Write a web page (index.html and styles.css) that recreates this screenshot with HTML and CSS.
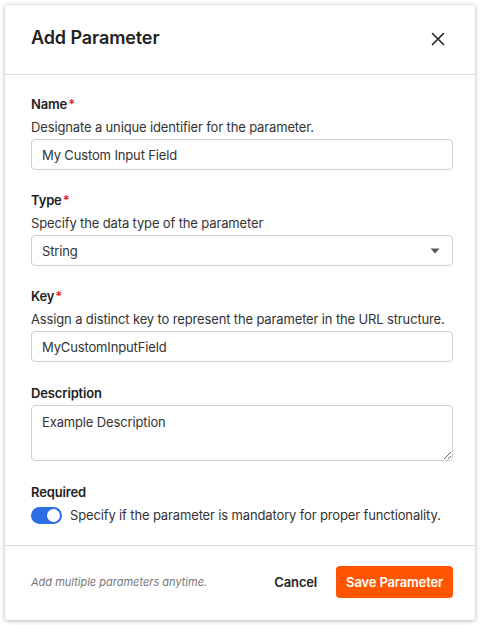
FILE: index.html
```html
<!DOCTYPE html>
<html>
<head>
<meta charset="utf-8">
<link rel="stylesheet" href="styles.css">
</head>
<body>
<div class="modal">
  <div class="modal-header">
    <h2 class="title">Add Parameter</h2>
    <button class="close" aria-label="Close">
      <svg width="14" height="14" viewBox="0 0 14 14"><path d="M1.5 1.5 L12.5 12.5 M12.5 1.5 L1.5 12.5" stroke="#222" stroke-width="1.6" fill="none" stroke-linecap="round"/></svg>
    </button>
  </div>
  <div class="modal-body">
    <div class="field">
      <div class="label">Name<span class="req">*</span></div>
      <div class="desc">Designate a unique identifier for the parameter.</div>
      <input class="input" type="text" value="My Custom Input Field">
    </div>
    <div class="field">
      <div class="label">Type<span class="req">*</span></div>
      <div class="desc">Specify the data type of the parameter</div>
      <div class="select">
        <span>String</span>
        <svg width="10" height="6" viewBox="0 0 10 6"><path d="M0.5 0.5 L9.5 0.5 L5 5.5 Z" fill="#555"/></svg>
      </div>
    </div>
    <div class="field">
      <div class="label">Key<span class="req">*</span></div>
      <div class="desc">Assign a distinct key to represent the parameter in the URL structure.</div>
      <input class="input" type="text" value="MyCustomInputField">
    </div>
    <div class="field field-nudge">
      <div class="label">Description</div>
      <textarea class="textarea">Example Description</textarea>
    </div>
    <div class="field field-nudge">
      <div class="label">Required</div>
      <div class="toggle-row">
        <span class="toggle"><span class="knob"></span></span>
        <span class="toggle-text">Specify if the parameter is mandatory for proper functionality.</span>
      </div>
    </div>
  </div>
  <div class="modal-footer">
    <span class="hint">Add multiple parameters anytime.</span>
    <div class="actions">
      <button class="btn-cancel">Cancel</button>
      <button class="btn-save">Save Parameter</button>
    </div>
  </div>
</div>
</body>
</html>
```
FILE: styles.css
```css
* { box-sizing: border-box; }
html, body { margin: 0; padding: 0; background: #fff; }
body {
  padding: 5px;
  font-family: Inter, "Noto Sans", sans-serif;
  color: #222;
}
.modal {
  width: 470px;
  height: 615px;
  background: #fff;
  border-radius: 2px;
  box-shadow: 0 0 1px rgba(0,0,0,0.35), 0 1px 5px rgba(0,0,0,0.25);
  display: flex;
  flex-direction: column;
}
.modal-header {
  height: 70px;
  display: flex;
  align-items: center;
  justify-content: space-between;
  padding: 0 30px 0 26px;
  border-bottom: 1px solid #dedede;
}
.title {
  margin: 0;
  font-size: 18px;
  font-weight: 600;
  color: #222;
  letter-spacing: -0.1px;
  padding-bottom: 4px;
}
.close {
  border: 0;
  background: none;
  padding: 0;
  width: 14px;
  height: 14px;
  display: flex;
  cursor: pointer;
  margin-bottom: 2px;
}
.modal-body {
  padding: 19px 22px 20px 26px;
  display: flex;
  flex-direction: column;
  gap: 20px;
  border-bottom: 1px solid #dedede;
  letter-spacing: -0.14px;
}
.field { display: flex; flex-direction: column; }
.field-nudge { margin-top: 1px; }
.label {
  font-size: 13px;
  font-weight: 600;
  line-height: 20px;
  color: #222;
}
.req { color: #e02424; margin-left: 1px; }
.desc {
  font-size: 13px;
  line-height: 20px;
  margin-top: 3px;
  color: #333;
}
.input, .select, .textarea {
  margin-top: 2px;
  width: 100%;
  height: 31px;
  border: 1px solid #cfcfcf;
  border-radius: 4px;
  font-family: Inter, "Noto Sans", sans-serif;
  font-size: 13px;
  letter-spacing: -0.14px;
  color: #333;
  padding: 0 10px;
  background: #fff;
}
.select {
  display: flex;
  align-items: center;
  justify-content: space-between;
  padding-right: 12px;
}
.textarea {
  height: 56px;
  padding: 8px 10px;
  line-height: 16px;
  resize: vertical;
}
.toggle-row {
  margin-top: 3px;
  height: 20px;
  display: flex;
  align-items: center;
  gap: 8px;
}
.toggle {
  width: 31px;
  height: 17px;
  border-radius: 9px;
  background: #2b6de3;
  display: flex;
  align-items: center;
  justify-content: flex-end;
  padding: 0 2px;
}
.knob {
  width: 13px;
  height: 13px;
  border-radius: 50%;
  background: #fff;
}
.toggle-text { font-size: 13px; color: #333; }
.modal-footer {
  flex: 1;
  display: flex;
  align-items: center;
  justify-content: space-between;
  padding: 0 22px 2px 26px;
}
.hint {
  font-size: 11px;
  font-style: italic;
  color: #777;
}
.actions { display: flex; align-items: center; gap: 19px; }
.btn-cancel {
  border: 0;
  background: none;
  font-family: Inter, "Noto Sans", sans-serif;
  font-size: 13px;
  font-weight: 600;
  letter-spacing: -0.15px;
  color: #222;
  padding: 0;
}
.btn-save {
  border: 0;
  background: #ff5500;
  color: #fff;
  font-family: Inter, "Noto Sans", sans-serif;
  font-size: 13px;
  font-weight: 600;
  letter-spacing: -0.15px;
  height: 32px;
  padding: 0 10px;
  border-radius: 4px;
}
```
